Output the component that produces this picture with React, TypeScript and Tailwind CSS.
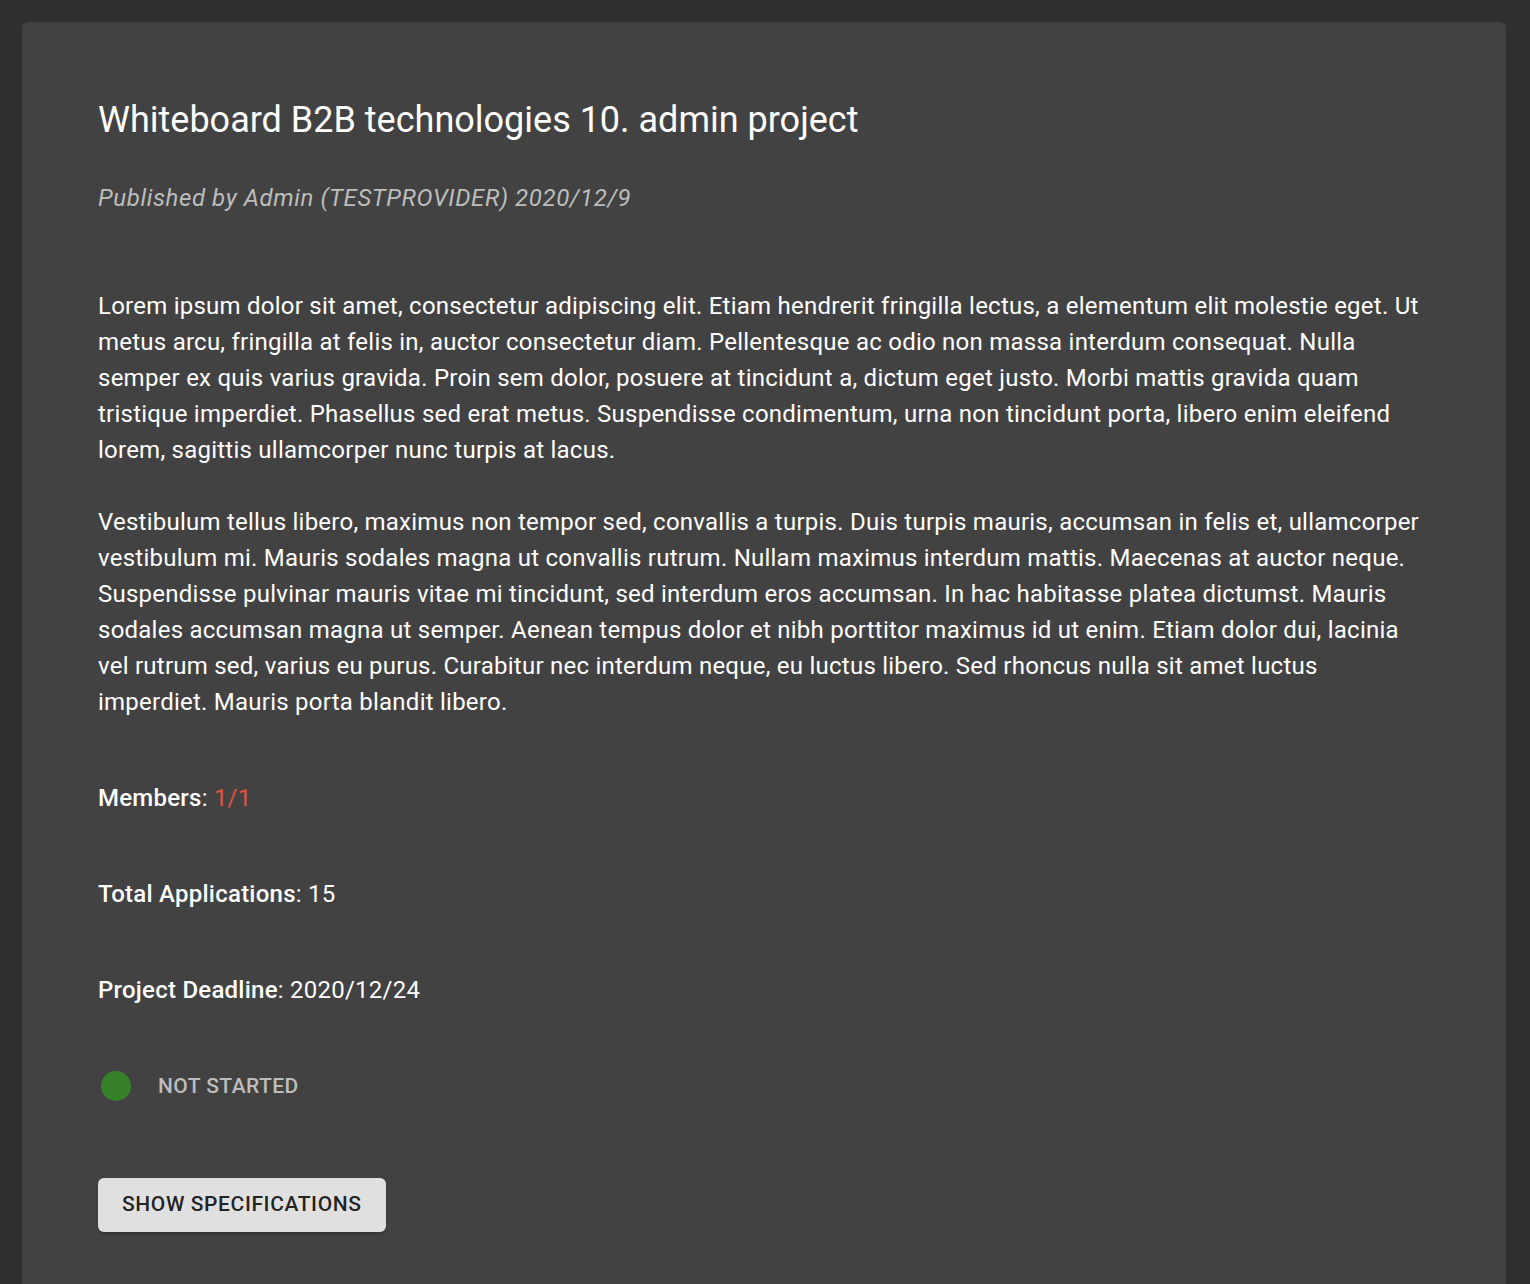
export default function App() {
  return (
    <div className="min-h-[1284px] bg-[#303030] pl-[22px] pr-[24px] pt-[22px] font-['Roboto','Liberation_Sans',sans-serif]">
      <div className="rounded-md bg-[#424242] pl-[76px] pr-[74px] pb-[60px] pt-[74px] shadow-[0_2px_2px_rgba(0,0,0,0.2)]">
        {/* title */}
        <h1 className="text-[36px] leading-[48px] font-normal text-white">
          Whiteboard B2B technologies 10. admin project
        </h1>
        <p className="mt-[36px] text-[24px] leading-[36px] italic tracking-[0.6px] text-[#bdbdbd]">
          Published by Admin (TESTPROVIDER) 2020/12/9
        </p>

        {/* description */}
        <div className="mt-[72px] text-[24px] leading-[36px] tracking-[0.24px] text-white">
          <p>
            Lorem ipsum dolor sit amet, consectetur adipiscing elit. Etiam hendrerit fringilla lectus, a elementum elit
            molestie eget. Ut metus arcu, fringilla at felis in, auctor consectetur diam. Pellentesque ac odio non massa
            interdum consequat. Nulla semper ex quis varius gravida. Proin sem dolor, posuere at tincidunt a, dictum eget
            justo. Morbi mattis gravida quam tristique imperdiet. Phasellus sed erat metus. Suspendisse condimentum, urna
            non tincidunt porta, libero enim eleifend lorem, sagittis ullamcorper nunc turpis at lacus.
          </p>
          <p className="mt-[36px]">
            Vestibulum tellus libero, maximus non tempor sed, convallis a turpis. Duis turpis mauris, accumsan in felis
            et, ullamcorper vestibulum mi. Mauris sodales magna ut convallis rutrum. Nullam maximus interdum mattis.
            Maecenas at auctor neque. Suspendisse pulvinar mauris vitae mi tincidunt, sed interdum eros accumsan. In hac
            habitasse platea dictumst. Mauris sodales accumsan magna ut semper. Aenean tempus dolor et nibh porttitor
            maximus id ut enim. Etiam dolor dui, lacinia vel rutrum sed, varius eu purus. Curabitur nec interdum neque,
            eu luctus libero. Sed rhoncus nulla sit amet luctus imperdiet. Mauris porta blandit libero.
          </p>
        </div>

        {/* stats */}
        <div className="mt-[60px] flex flex-col gap-[60px] text-[24px] leading-[36px] tracking-[0.24px] text-white">
          <p>
            <span className="font-medium">Members</span>: <span className="text-[#e05241]">1/1</span>
          </p>
          <p>
            <span className="font-medium">Total Applications</span>: 15
          </p>
          <p>
            <span className="font-medium">Project Deadline</span>: 2020/12/24
          </p>
          <div className="flex h-[36px] items-center">
            <span className="ml-[3px] h-[30px] w-[30px] rounded-full bg-[#37802a]" />
            <span className="ml-[27px] text-[21px] font-medium uppercase tracking-[0.45px] text-[#bdbdbd]">
              Not Started
            </span>
          </div>
        </div>

        <button className="mt-[74px] h-[54px] rounded-md bg-[#e0e0e0] px-[24px] text-[21px] font-medium uppercase tracking-[0.6px] text-[rgba(0,0,0,0.87)] shadow-[0_2px_2px_rgba(0,0,0,0.2)]">
          Show Specifications
        </button>
      </div>
    </div>
  );
}
